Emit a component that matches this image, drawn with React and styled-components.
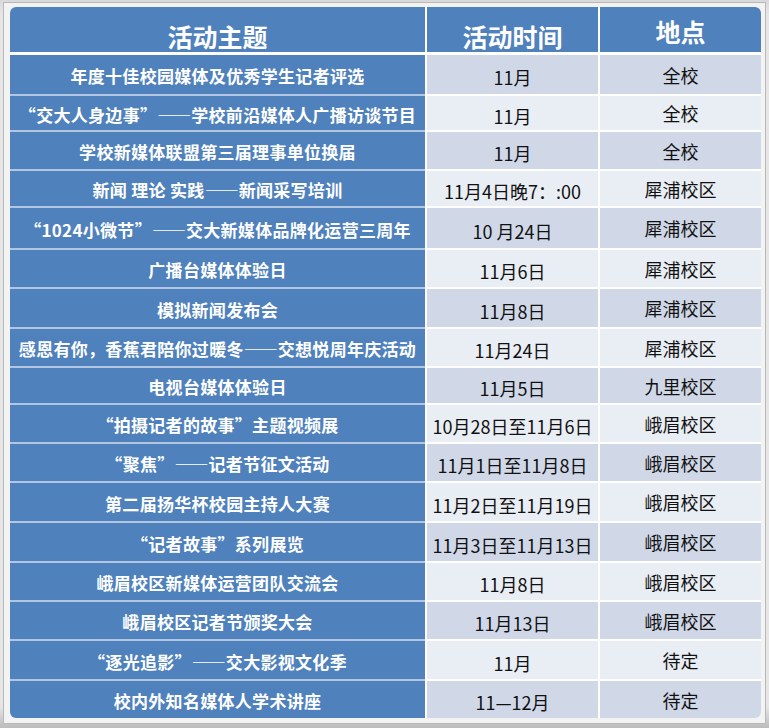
import React from 'react';
import styled, { createGlobalStyle } from 'styled-components';

const GlobalStyle = createGlobalStyle`
  html, body {
    margin: 0;
    padding: 0;
    background: #ffffff;
  }
`;

const Frame = styled.div`
  width: 769px;
  height: 728px;
  box-sizing: border-box;
  padding: 2px 3px 4px 3px;
  background: linear-gradient(#d9d9d9, #e6e6e6 2%, #e6e6e6 97%, #bcbcbc);
`;

const Bezel = styled.div`
  height: 100%;
  box-sizing: border-box;
  padding: 4px 4px 5px 6px;
  border: 1px solid #b8b8b8;
  background: #f3f3f3;
`;

const Table = styled.div`
  display: grid;
  grid-template-columns: 415px 171px 161px;
  column-gap: 2px;
  background: #ffffff;
  border-radius: 6px;
  overflow: hidden;
  font-family: "Noto Sans CJK SC", sans-serif;
`;

const HeadCell = styled.div`
  height: 45px;
  box-sizing: border-box;
  display: flex;
  align-items: flex-end;
  justify-content: center;
  padding-bottom: ${(p) => p.$lift}px;
  margin-bottom: 3px;
  background: #4f81bd;
  color: #ffffff;
  font-size: 25px;
  font-weight: 700;
  line-height: 30px;
`;

const TopicCell = styled.div`
  height: ${(p) => p.$h}px;
  box-sizing: border-box;
  display: flex;
  align-items: center;
  justify-content: center;
  padding-top: 2px;
  border-top: ${(p) => (p.$first ? 'none' : '2px solid #b3c6e1')};
  background: #4f81bd;
  color: #ffffff;
  font-size: 17px;
  font-weight: 700;
  white-space: nowrap;
  letter-spacing: 0.3px;
`;

// the em dashes are full width in the original
const Dash = styled.span`
  font-feature-settings: "fwid" 1;
  letter-spacing: 0;
`;

const ValueCell = styled.div`
  height: ${(p) => p.$h}px;
  box-sizing: border-box;
  display: flex;
  align-items: center;
  justify-content: center;
  padding-top: ${(p) => p.$shift}px;
  border-top: ${(p) => (p.$first ? 'none' : '2px solid #ffffff')};
  background: ${(p) => (p.$odd ? '#d0d8e8' : '#e9edf4')};
  color: #111111;
  font-size: 18px;
  white-space: nowrap;
`;

const rows = [
  ['年度十佳校园媒体及优秀学生记者评选', '11月', '全校', 39],
  ['“交大人身边事”——学校前沿媒体人广播访谈节目', '11月', '全校', 36],
  ['学校新媒体联盟第三届理事单位换届', '11月', '全校', 39],
  ['新闻 理论 实践——新闻采写培训', '11月4日晚7：:00', '犀浦校区', 37],
  ['“1024小微节”——交大新媒体品牌化运营三周年', '10 月24日', '犀浦校区', 42],
  ['广播台媒体体验日', '11月6日', '犀浦校区', 39],
  ['模拟新闻发布会', '11月8日', '犀浦校区', 40],
  ['感恩有你，香蕉君陪你过暖冬——交想悦周年庆活动', '11月24日', '犀浦校区', 39],
  ['电视台媒体体验日', '11月5日', '九里校区', 37],
  ['“拍摄记者的故事”主题视频展', '10月28日至11月6日', '峨眉校区', 39],
  ['“聚焦”——记者节征文活动', '11月1日至11月8日', '峨眉校区', 39],
  ['第二届扬华杯校园主持人大赛', '11月2日至11月19日', '峨眉校区', 40],
  ['“记者故事”系列展览', '11月3日至11月13日', '峨眉校区', 40],
  ['峨眉校区新媒体运营团队交流会', '11月8日', '峨眉校区', 39],
  ['峨眉校区记者节颁奖大会', '11月13日', '峨眉校区', 39],
  ['“逐光追影”——交大影视文化季', '11月', '待定', 40],
  ['校内外知名媒体人学术讲座', '11—12月', '待定', 39],
];

const withDashes = (text) => {
  const parts = text.split('——');
  return parts.map((part, i) => (
    <React.Fragment key={i}>
      {i > 0 && <Dash>——</Dash>}
      {part}
    </React.Fragment>
  ));
};

const App = () => {
  return (
    <>
      <GlobalStyle />
      <Frame>
        <Bezel>
          <Table>
            <HeadCell $lift={1}>活动主题</HeadCell>
            <HeadCell $lift={1}>活动时间</HeadCell>
            <HeadCell $lift={6}>地点</HeadCell>
            {rows.map(([topic, time, place, h], i) => (
              <React.Fragment key={topic}>
                <TopicCell $h={h} $first={i === 0}>{withDashes(topic)}</TopicCell>
                <ValueCell $h={h} $first={i === 0} $odd={i % 2 === 0} $shift={5}>{time}</ValueCell>
                <ValueCell $h={h} $first={i === 0} $odd={i % 2 === 0} $shift={-3}>{place}</ValueCell>
              </React.Fragment>
            ))}
          </Table>
        </Bezel>
      </Frame>
    </>
  );
};

export default App;
